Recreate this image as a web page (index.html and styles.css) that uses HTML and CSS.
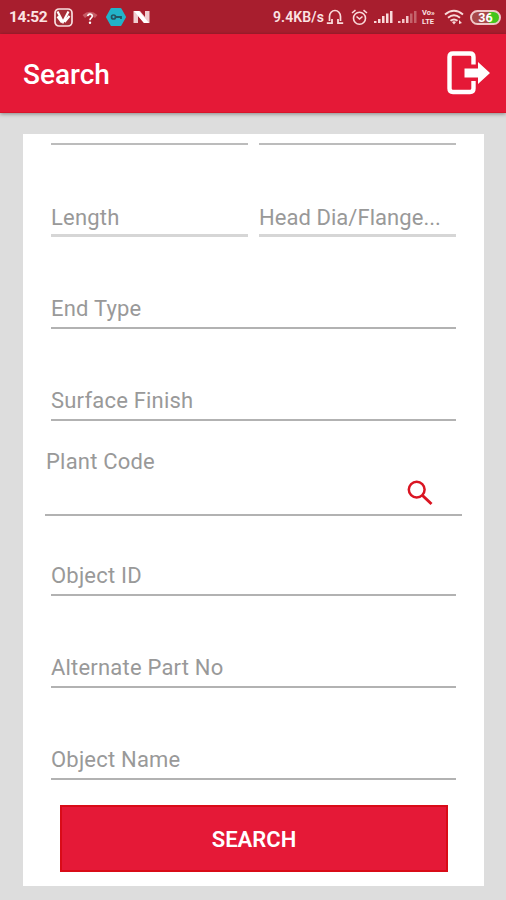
FILE: index.html
```html
<!DOCTYPE html>
<html lang="en">
<head>
<meta charset="utf-8">
<title>Search</title>
<link rel="stylesheet" href="styles.css">
</head>
<body>
<div class="status">
  <span class="time">14:52</span>
  <svg class="app" width="19" height="19" viewBox="0 0 19 19"><rect x="1" y="1" width="17" height="17" rx="4" fill="#a52e38" stroke="#f8dfe0" stroke-width="1.7"/><path d="M3.500 3.500L9 14L14.500 3.500M3.500 8.500L8 14.500M10.500 14L15.500 8" fill="none" stroke="#fff" stroke-width="2.200"/></svg>
  <svg class="wifi-q" width="16" height="15" viewBox="0 0 16 15"><path d="M.5 5Q8-1.500 15.500 5L13 8Q8 3 3 8Z" fill="#c65b65"/><path d="M5.700 6.200Q6 4 8 4T10.300 6Q10.300 7.300 8.800 8.300Q8 9 8 10.200" fill="none" stroke="#fff" stroke-width="1.600"/><circle cx="8" cy="12.700" r="1.200" fill="#fff"/></svg>
  <svg class="key" width="20" height="18" viewBox="0 0 20 18"><path d="M5.500 1H14.500L19 9L14.500 17H5.500L1 9Z" fill="#22b3c9" stroke="#22b3c9" stroke-width="2" stroke-linejoin="round"/><circle cx="7.500" cy="9" r="2" fill="none" stroke="#245564" stroke-width="1.700"/><path d="M9.500 9H15V11" fill="none" stroke="#245564" stroke-width="1.800"/></svg>
  <svg class="n" width="17" height="14" viewBox="0 0 17 14"><path d="M.5 1H7L12 7V1H16.500V13H11L5 6V13H.5Z" fill="#f1cdd0"/><path d="M1 1H6L16 13H11Z" fill="#fff"/></svg>
  <span class="speed">9.4KB/s</span>
  <svg class="phones" width="18" height="16" viewBox="0 0 18 16"><path d="M3.500 12V7.500A5.500 6 0 0 1 14.500 7.500V12" fill="none" stroke="#f9dada" stroke-width="1.700"/><path d="M.8 14.200H6V10M17.200 14.200H12V10" fill="none" stroke="#f9dada" stroke-width="1.800"/></svg>
  <svg class="alarm" width="17" height="17" viewBox="0 0 17 17"><g fill="none" stroke="#f9dada" stroke-width="1.600"><circle cx="8.500" cy="9.200" r="6"/><path d="M1 4L4.500 1.200M16 4L12.500 1.200M5.500 7.500L8.500 10L11.500 7.500"/></g></svg>
  <svg class="sig1" width="20" height="14" viewBox="0 0 20 14" fill="#f9dada"><path d="M1 11h2.500v2H1zM5 9h2.500v4H5zM9 6h2.500v7H9zM13 3.500h2.500V13H13zM17 1h2.500v12H17z"/></svg>
  <svg class="sig2" width="20" height="14" viewBox="0 0 20 14" fill="#f3c5c8"><path d="M1 11h2.500v2H1zM5 9h2.500v4H5zM9 6h2.500v7H9z"/><path d="M13 3.500h2.500V13H13zM17 1h2.500v12H17z" fill="#c4636b"/></svg>
  <span class="volte"><span>Vo»</span><span>LTE</span></span>
  <svg class="wifi" width="20" height="16" viewBox="0 0 20 16"><g fill="none" stroke="#f9dada" stroke-width="1.900"><path d="M1 5.500Q10-2 19 5.500M4 8.800Q10 3.800 16 8.800M6.500 11.800Q10 9 13.500 11.800"/></g><path d="M8 13Q10 11.500 12 13L10 15.500ZM15 11l3 3-3 1z" fill="#f9dada"/></svg>
  <span class="battery">36</span>
</div>
<header class="bar">
  <h1>Search</h1>
  <svg width="46" height="46" viewBox="0 0 46 46"><path d="M28.500 14.500V7Q28.500 3.500 25 3.500H8Q4.500 3.500 4.500 7V38.500Q4.500 42 8 42H25Q28.500 42 28.500 38.500V31" fill="none" stroke="#fff" stroke-width="4.400"/><path d="M19.500 18.500H33V12L45 23L33 34V27.500H19.500Z" fill="#fff"/></svg>
</header>
<main class="card">
  <div class="pair first"><div class="field"></div><div class="field"></div></div>
  <div class="pair"><div class="field"><span>Length</span></div><div class="field"><span class="tight">Head Dia/Flange...</span></div></div>
  <div class="field"><span>End Type</span></div>
  <div class="field"><span>Surface Finish</span></div>
  <div class="plant"><span>Plant Code</span>
    <svg width="26" height="26" viewBox="0 0 26 26"><circle cx="9.700" cy="9.600" r="7.900" fill="none" stroke="#da1522" stroke-width="2.500"/><path d="M15.500 15.500L24.500 24" stroke="#da1522" stroke-width="3"/></svg>
  </div>
  <div class="field after-plant"><span>Object ID</span></div>
  <div class="field"><span>Alternate Part No</span></div>
  <div class="field"><span>Object Name</span></div>
  <button class="submit">SEARCH</button>
</main>
</body>
</html>
```
FILE: styles.css
```css
* { box-sizing: border-box; }
body { margin: 0; height: 900px; overflow: hidden; background: #ddd; font-family: Roboto, sans-serif; }
svg { display: block; flex: none; }
.status { height: 34px; display: flex; align-items: center; background: #a81e2e; color: #fbe3e3; padding-left: 9px; white-space: nowrap; }
.time { width: 38px; font-size: 15.5px; font-weight: 700; letter-spacing: -.3px; }
.app { margin-left: 7px; }
.wifi-q { margin-left: 9px; }
.key { margin-left: 8px; }
.n { margin-left: 7px; }
.speed { margin-left: 123px; width: 52px; font-size: 14px; font-weight: 600; letter-spacing: .1px; }
.phones { margin-left: 1px; }
.alarm { margin-left: 7px; }
.sig1 { margin-left: 5px; }
.sig2 { margin-left: 4px; }
.volte { margin-left: 5px; width: 18px; display: flex; flex-direction: column; font-size: 7.5px; font-weight: 700; line-height: 9px; }
.wifi { margin-left: 4px; }
.battery { margin-left: 6px; width: 31px; height: 15px; border: 2px solid #f0c8c8; border-radius: 8px; background: linear-gradient(90deg, #a84849 0 64%, #43c51c 64%); color: #fff; font-size: 12.5px; font-weight: 700; line-height: 11px; text-align: center; }
.bar { height: 79px; background: #e51937; display: flex; align-items: center; justify-content: space-between; padding: 0 15px 0 23px; border-bottom: 1px solid #d8142a; box-shadow: 0 1px 4px rgba(0, 0, 0, .4); }
.bar h1 { margin: 3px 0 0; color: #fff; font-size: 28px; font-weight: 500; letter-spacing: 0; }
.card { width: 461px; height: 752px; margin: 21px 0 0 23px; background: #fff; padding: 0 28px; color: #999; font-size: 22px; letter-spacing: .2px; }
.field { height: 92px; display: flex; flex-direction: column; justify-content: flex-end; border-bottom: 2px solid #b2b2b2; padding-bottom: 5px; line-height: 26px; white-space: nowrap; }
.pair { display: grid; grid-template-columns: 197px 197px; gap: 11px; }
.pair .field { border-bottom-width: 3px; border-bottom-color: #d6d6d6; padding-bottom: 3px; }
.tight { letter-spacing: .05px; }
.first .field { height: 11px; border-bottom: 2px solid #bcbcbc; }
.plant { height: 95px; margin: 0 -6px; display: flex; justify-content: space-between; border-bottom: 2px solid #b2b2b2; padding: 28px 29px 0 1px; line-height: 26px; }
.plant svg { margin-top: 31px; }
.after-plant { height: 80px; }
.submit { display: block; width: 388px; height: 67px; margin: 25px 0 0 9px; border: 2px solid #d90b18; background: #e51937; color: #fff; font: 600 22px Roboto, sans-serif; padding: 2px 0 0; }
```
